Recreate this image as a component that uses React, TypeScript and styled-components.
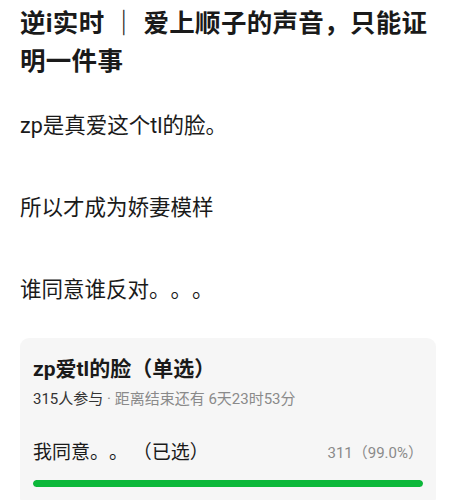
import React from "react";
import styled, { createGlobalStyle } from "styled-components";

const GlobalStyle = createGlobalStyle`
  html, body {
    margin: 0;
    padding: 0;
    background: #fff;
  }
  body {
    font-family: "Roboto", "Noto Sans CJK SC", sans-serif;
    color: #1a1a1a;
    text-spacing-trim: space-all;
  }
`;

const App = () => {
  return (
    <>
      <GlobalStyle />
      <Page>
        <Title>逆i实时 ｜ 爱上顺子的声音，只能证明一件事</Title>
        <Body>
          <Paragraph>zp是真爱这个tl的脸。</Paragraph>
          <Paragraph>所以才成为娇妻模样</Paragraph>
          <Paragraph>谁同意谁反对。。。</Paragraph>
        </Body>
        <PollCard>
          <PollTitle>zp爱tl的脸（单选）</PollTitle>
          <PollMeta>
            <strong>315人参与</strong> · 距离结束还有 6天23时53分
          </PollMeta>
          <Option>
            <OptionRow>
              <OptionLabel>我同意。。 （已选）</OptionLabel>
              <OptionCount>311（99.0%）</OptionCount>
            </OptionRow>
            <Track>
              <Fill style={{ width: "100%" }} />
            </Track>
          </Option>
        </PollCard>
      </Page>
    </>
  );
};

const Page = styled.div`
  padding: 4px 22px 0 20px;
`;

const Title = styled.h1`
  margin: 0;
  font-size: 25.5px;
  line-height: 38px;
  font-weight: 700;
  color: #1a1a1a;
  letter-spacing: 0.3px;
`;

const Body = styled.div`
  padding-top: 25px;
  display: flex;
  flex-direction: column;
  gap: 41px;
`;

const Paragraph = styled.p`
  margin: 0;
  font-size: 21.5px;
  line-height: 41px;
  color: #1a1a1a;
`;

const PollCard = styled.div`
  margin-top: 28px;
  background: #f6f6f6;
  border-radius: 9px;
  padding: 16px 13px 20px 13px;
`;

const PollTitle = styled.div`
  font-size: 21px;
  line-height: 30px;
  font-weight: 700;
  color: #1a1a1a;
`;

const PollMeta = styled.div`
  margin-top: 2px;
  font-size: 15px;
  line-height: 26px;
  color: #8a8a8a;

  strong {
    font-weight: 400;
    color: #333;
  }
`;

const Option = styled.div`
  margin-top: 27px;
`;

const OptionRow = styled.div`
  display: flex;
  justify-content: space-between;
  align-items: center;
`;

const OptionLabel = styled.span`
  font-size: 19px;
  line-height: 28px;
  color: #1a1a1a;
  white-space: pre;
`;

const OptionCount = styled.span`
  font-size: 15px;
  line-height: 28px;
  color: #8a8a8a;
`;

const Track = styled.div`
  margin-top: 13px;
  height: 7px;
  border-radius: 4px;
  background: #e6e6e6;
  overflow: hidden;
`;

const Fill = styled.div`
  height: 100%;
  background: #0cb83a;
  border-radius: 4px;
`;

export default App;
